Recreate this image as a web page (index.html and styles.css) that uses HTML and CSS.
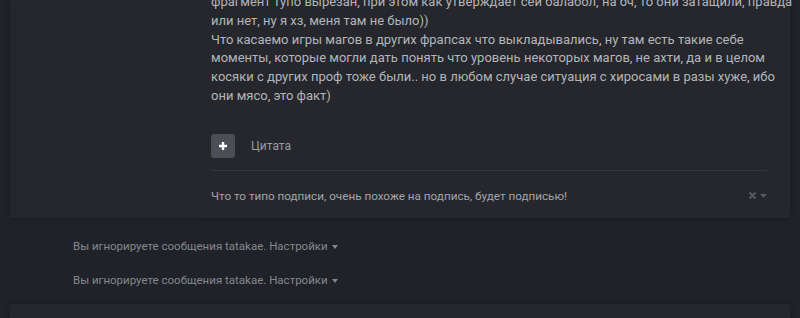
FILE: index.html
```html
<!DOCTYPE html>
<html lang="ru">
<head>
<meta charset="utf-8">
<link rel="stylesheet" href="styles.css">
</head>
<body>
<div class="page">
  <article class="post">
    <aside class="author"></aside>
    <div class="main">
      <div class="content">
        <p>фрагмент тупо вырезан, при этом как утверждает сей балабол, на бч, то они затащили, правда<br>или нет, ну я хз, меня там не было))<br>Что касаемо игры магов в других фрапсах что выкладывались, ну там есть такие себе<br>моменты, которые могли дать понять что уровень некоторых магов, не ахти, да и в целом<br>косяки с других проф тоже были.. но в любом случае ситуация с хиросами в разы хуже, ибо<br>они мясо, это факт)</p>
      </div>
      <div class="actions">
        <span class="plus"><svg width="10" height="10" viewBox="0 0 10 10"><path d="M5 1v8M1 5h8" stroke="#fff" stroke-width="2.4"/></svg></span>
        <span class="quote">Цитата</span>
      </div>
      <div class="signature">
        <span>Что то типо подписи, очень похоже на подпись, будет подписью!</span>
        <span class="sig-tools">
          <svg width="9" height="9" viewBox="0 0 9 9"><path d="M1.5 1.5l6 6M7.5 1.5l-6 6" stroke="#55585e" stroke-width="2"/></svg>
          <svg width="7" height="4" viewBox="0 0 7 4"><path d="M0 0h7L3.5 4z" fill="#55585e"/></svg>
        </span>
      </div>
    </div>
  </article>
  <div class="ignored">Вы игнорируете сообщения tatakae. Настройки <span class="caret"></span></div>
  <div class="ignored">Вы игнорируете сообщения tatakae. Настройки <span class="caret"></span></div>
  <article class="post next"></article>
</div>
</body>
</html>
```
FILE: styles.css
```css
html, body {
  margin: 0;
  padding: 0;
  background: #1f2229;
  overflow: hidden;
}
body {
  font-family: Roboto, "Noto Sans", sans-serif;
  color: #b4b6ba;
}
.page {
  padding: 0 10px 0 10px;
}
.post {
  display: flex;
  background: #25272d;
  border-radius: 0 0 4px 4px;
  box-shadow: 0 0 6px rgba(0,0,0,0.25);
}
.author {
  width: 190px;
  flex: none;
  background: #24262c;
}
.main {
  flex: 1;
  min-width: 0;
  padding: 0 23px 0 11px;
}
.content p {
  margin: -7px 0 0 0;
  font-size: 13px;
  line-height: 18.8px;
  color: #b3b5b9;
  white-space: nowrap;
}
.actions {
  display: flex;
  align-items: center;
  gap: 16px;
  margin-top: 28px;
  padding-bottom: 12px;
  border-bottom: 1px solid #34363c;
}
.plus {
  width: 24px;
  height: 24px;
  border-radius: 3px;
  background: #4b4e55;
  display: flex;
  align-items: center;
  justify-content: center;
}
.quote {
  font-size: 12px;
  color: #9a9ca1;
}
.signature {
  display: flex;
  justify-content: space-between;
  align-items: center;
  font-size: 11.7px;
  color: #a3a5a9;
  padding: 18px 0 15px;
}
.sig-tools {
  display: flex;
  align-items: center;
  gap: 3px;
}
.ignored {
  font-size: 11.5px;
  color: #85878c;
  padding-left: 63px;
  line-height: 16px;
}
.ignored:first-of-type {
  margin-top: 20px;
}
.ignored + .ignored {
  margin-top: 18px;
}
.caret {
  display: inline-block;
  width: 0;
  height: 0;
  border-left: 3.5px solid transparent;
  border-right: 3.5px solid transparent;
  border-top: 4px solid #85878c;
  vertical-align: middle;
  margin-left: 1px;
}
.next {
  margin-top: 16px;
  height: 40px;
  border-radius: 4px 4px 0 0;
}
```
